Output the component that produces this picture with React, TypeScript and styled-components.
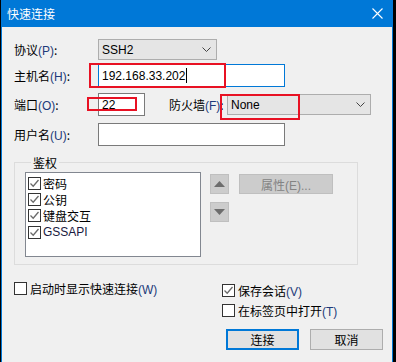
import React from "react";
import styled, { createGlobalStyle } from "styled-components";

const GlobalStyle = createGlobalStyle`
  html, body {
    margin: 0;
    padding: 0;
    background: #000;
    overflow: hidden;
  }
  body {
    font-family: "Noto Sans", "Noto Sans CJK SC", sans-serif;
    font-size: 12px;
    color: #000;
  }
`;

const Window = styled.div`
  position: relative;
  box-sizing: border-box;
  width: 392px;
  height: 362px;
  margin-left: 1px;
  border-left: 1px solid #0078d7;
  border-right: 1px solid #0078d7;
  background: #f0f0f0;
`;

const TitleBar = styled.div`
  height: 27px;
  background: #0078d7;
  color: #fff;
  display: flex;
  align-items: center;
  justify-content: space-between;
  padding: 0 9px 0 5px;
  font-family: "Noto Sans CJK SC", sans-serif;
  font-size: 12px;
`;

const Content = styled.div`
  padding: 11px 0 0 12px;
`;

const Row = styled.div<{ $mt?: number }>`
  display: flex;
  align-items: center;
  margin-top: ${(p) => p.$mt ?? 0}px;
  height: 23px;
`;

const Label = styled.span<{ $w?: number }>`
  width: ${(p) => p.$w ?? 84}px;
  flex-shrink: 0;
  font-family: "Noto Sans CJK SC", sans-serif;
  white-space: nowrap;
`;

const Key = styled.span`
  font-family: "Liberation Sans", sans-serif;
  color: #1d3a7a;
`;

const Combo = styled.div<{ $w: number }>`
  box-sizing: border-box;
  width: ${(p) => p.$w}px;
  height: 21px;
  background: #e5e5e5;
  border: 1px solid #adadad;
  display: flex;
  align-items: center;
  justify-content: space-between;
  padding: 0 5px 0 3px;
  font-family: "Liberation Sans", sans-serif;
  color: #000;
`;

const Input = styled.div<{ $w: number; $focus?: boolean }>`
  box-sizing: border-box;
  width: ${(p) => p.$w}px;
  height: 23px;
  background: #fff;
  border: 1px solid ${(p) => (p.$focus ? "#0078d7" : "#7a7a7a")};
  display: flex;
  align-items: center;
  padding-left: 3px;
  font-family: "Liberation Sans", sans-serif;
  font-size: 12px;
`;

const Caret = styled.span`
  display: inline-block;
  width: 1px;
  height: 15px;
  background: #000;
  margin-left: 1px;
`;

const Group = styled.fieldset`
  box-sizing: border-box;
  width: 344px;
  height: 111px;
  margin: 8px 0 0 0;
  padding: 1px 0 0 10px;
  border: 1px solid #dcdcdc;
  display: flex;
  align-items: flex-start;
  gap: 9px;
`;

const Legend = styled.legend`
  padding: 0 2px;
  margin-left: 6px;
  font-family: "Noto Sans CJK SC", sans-serif;
  font-size: 12px;
`;

const ListBox = styled.div`
  box-sizing: border-box;
  width: 176px;
  height: 85px;
  background: #fff;
  border: 1px solid #828790;
  padding: 2px 0 0 2px;
  display: flex;
  flex-direction: column;
`;

const Item = styled.div`
  display: flex;
  align-items: center;
  height: 16.3px;
  gap: 2px;
  font-family: "Noto Sans CJK SC", sans-serif;
`;

const Latin = styled.span`
  font-family: "Liberation Sans", sans-serif;
  color: #1a1a40;
`;

const Box = styled.span`
  box-sizing: border-box;
  width: 13px;
  height: 13px;
  border: 1px solid #333;
  background: #fff;
  display: inline-flex;
  align-items: center;
  justify-content: center;
  flex-shrink: 0;
`;

const ArrowCol = styled.div`
  display: flex;
  flex-direction: column;
  gap: 8px;
  padding-top: 2px;
`;

const ArrowBtn = styled.div`
  box-sizing: border-box;
  width: 19px;
  height: 20px;
  background: #cccccc;
  border: 1px solid #bfbfbf;
  display: flex;
  align-items: center;
  justify-content: center;
`;

const PropBtn = styled.div`
  box-sizing: border-box;
  width: 94px;
  height: 20px;
  margin: 2px 0 0 1px;
  background: #cccccc;
  border: 1px solid #bfbfbf;
  color: #838383;
  display: flex;
  align-items: center;
  justify-content: center;
  font-family: "Noto Sans CJK SC", sans-serif;
`;

const Bottom = styled.div`
  display: flex;
  margin-top: 17px;
`;

const LeftCol = styled.div`
  width: 208px;
`;

const RightCol = styled.div`
  display: flex;
  flex-direction: column;
  padding-top: 2px;
`;

const Check = styled.label`
  display: flex;
  align-items: center;
  gap: 3px;
  height: 13px;
  margin-bottom: 7px;
  font-family: "Noto Sans CJK SC", sans-serif;
  white-space: nowrap;
`;

const Buttons = styled.div`
  display: flex;
  gap: 11px;
  margin: 5px 0 0 4px;
`;

const Button = styled.div<{ $primary?: boolean }>`
  box-sizing: border-box;
  width: 73px;
  height: 21px;
  background: #e1e1e1;
  border: ${(p) => (p.$primary ? "2px solid #0078d7" : "1px solid #adadad")};
  display: flex;
  align-items: center;
  justify-content: center;
  font-family: "Noto Sans CJK SC", sans-serif;
`;

const Mark = styled.div<{ $x: number; $y: number; $w: number; $h: number }>`
  position: absolute;
  box-sizing: border-box;
  left: ${(p) => p.$x}px;
  top: ${(p) => p.$y}px;
  width: ${(p) => p.$w}px;
  height: ${(p) => p.$h}px;
  border: 2px solid #e81123;
  pointer-events: none;
`;

const Chevron = () => (
  <svg width="9" height="5" viewBox="0 0 9 5">
    <path d="M0.5 0.5 L4.5 4.5 L8.5 0.5" fill="none" stroke="#444" strokeWidth="1" />
  </svg>
);

const Tick = () => (
  <svg width="11" height="11" viewBox="0 0 11 11">
    <path d="M1.5 5.5 L4.2 8.2 L9.5 2" fill="none" stroke="#6a6a6a" strokeWidth="1.3" />
  </svg>
);

const CheckBox = ({ checked }: { checked?: boolean }) => <Box>{checked ? <Tick /> : null}</Box>;

const Close = () => (
  <svg width="11" height="11" viewBox="0 0 11 11">
    <path d="M0.5 0.5 L10.5 10.5 M10.5 0.5 L0.5 10.5" stroke="#fff" strokeWidth="1.1" />
  </svg>
);

const Triangle = ({ up }: { up?: boolean }) => (
  <svg width="11" height="6" viewBox="0 0 11 6">
    <path d={up ? "M0 6 L5.5 0 L11 6 Z" : "M0 0 L5.5 6 L11 0 Z"} fill="#6d6d6d" />
  </svg>
);

const methods = ["密码", "公钥", "键盘交互"];

export default function App() {
  return (
    <>
      <GlobalStyle />
      <Window>
        <TitleBar>
          <span>快速连接</span>
          <Close />
        </TitleBar>
        <Content>
          <Row>
            <Label>
              协议<Key>(P)</Key>:
            </Label>
            <Combo $w={119}>
              <span>SSH2</span>
              <Chevron />
            </Combo>
          </Row>
          <Row $mt={3}>
            <Label>
              主机名<Key>(H)</Key>:
            </Label>
            <Input $w={187} $focus>
              192.168.33.202
              <Caret />
            </Input>
          </Row>
          <Row $mt={6}>
            <Label>
              端口<Key>(O)</Key>:
            </Label>
            <Input $w={47}>22</Input>
            <Label $w={58} style={{ marginLeft: 24 }}>
              防火墙<Key>(F)</Key>:
            </Label>
            <Combo $w={144}>
              <span>None</span>
              <Chevron />
            </Combo>
          </Row>
          <Row $mt={7}>
            <Label>
              用户名<Key>(U)</Key>:
            </Label>
            <Input $w={187} />
          </Row>
          <Group>
            <Legend>鉴权</Legend>
            <ListBox>
              {methods.map((m) => (
                <Item key={m}>
                  <CheckBox checked />
                  {m}
                </Item>
              ))}
              <Item>
                <CheckBox checked />
                <Latin>GSSAPI</Latin>
              </Item>
            </ListBox>
            <ArrowCol>
              <ArrowBtn>
                <Triangle up />
              </ArrowBtn>
              <ArrowBtn>
                <Triangle />
              </ArrowBtn>
            </ArrowCol>
            <PropBtn>
              <span>
                属性<Key style={{ color: "#838383" }}>(E)...</Key>
              </span>
            </PropBtn>
          </Group>
          <Bottom>
            <LeftCol>
              <Check>
                <CheckBox />
                <span>
                  启动时显示快速连接<Key>(W)</Key>
                </span>
              </Check>
            </LeftCol>
            <RightCol>
              <Check>
                <CheckBox checked />
                <span>
                  保存会话<Key>(V)</Key>
                </span>
              </Check>
              <Check>
                <CheckBox />
                <span>
                  在标签页中打开<Key>(T)</Key>
                </span>
              </Check>
              <Buttons>
                <Button $primary>连接</Button>
                <Button>取消</Button>
              </Buttons>
            </RightCol>
          </Bottom>
        </Content>
        <Mark $x={87} $y={63} $w={137} $h={25} />
        <Mark $x={85} $y={97} $w={50} $h={14} />
        <Mark $x={218} $y={94} $w={80} $h={26} />
      </Window>
    </>
  );
}
